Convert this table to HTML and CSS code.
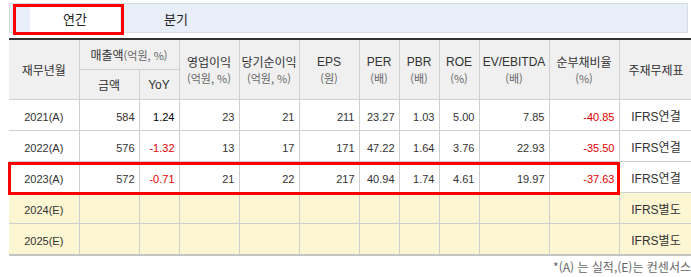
FILE: index.html
```html
<!DOCTYPE html>
<html lang="ko">
<head>
<meta charset="utf-8">
<link rel="stylesheet" href="styles.css">
</head>
<body>
<div class="page">
  <div class="tabs">
    <div class="tab active">연간</div>
    <div class="tab">분기</div>
  </div>
  <div class="table-wrap">
    <table class="fin">
      <colgroup>
        <col class="c70"><col class="c60"><col class="c40"><col class="c60"><col class="c60"><col class="c60"><col class="c40"><col class="c40"><col class="c40"><col class="c70"><col class="c70"><col class="c72">
      </colgroup>
      <thead>
        <tr class="h1">
          <th rowspan="2">재무년월</th>
          <th colspan="2">매출액<span class="unit-inline">(억원, %)</span></th>
          <th rowspan="2">영업이익<br><span class="unit">(억원, %)</span></th>
          <th rowspan="2">당기순이익<br><span class="unit">(억원, %)</span></th>
          <th rowspan="2"><span class="en">EPS</span><br><span class="unit">(원)</span></th>
          <th rowspan="2"><span class="en">PER</span><br><span class="unit">(배)</span></th>
          <th rowspan="2"><span class="en">PBR</span><br><span class="unit">(배)</span></th>
          <th rowspan="2"><span class="en">ROE</span><br><span class="unit">(%)</span></th>
          <th rowspan="2"><span class="en">EV/EBITDA</span><br><span class="unit">(배)</span></th>
          <th rowspan="2">순부채비율<br><span class="unit">(%)</span></th>
          <th rowspan="2" class="last">주재무제표</th>
        </tr>
        <tr class="h2">
          <th>금액</th>
          <th><span class="en">YoY</span></th>
        </tr>
      </thead>
      <tbody>
        <tr>
          <td class="yr">2021(A)</td><td>584</td><td class="pos">1.24</td><td>23</td><td>21</td><td>211</td><td>23.27</td><td>1.03</td><td>5.00</td><td>7.85</td><td class="neg">-40.85</td><td class="kind">IFRS연결</td>
        </tr>
        <tr>
          <td class="yr">2022(A)</td><td>576</td><td class="neg">-1.32</td><td>13</td><td>17</td><td>171</td><td>47.22</td><td>1.64</td><td>3.76</td><td>22.93</td><td class="neg">-35.50</td><td class="kind">IFRS연결</td>
        </tr>
        <tr>
          <td class="yr">2023(A)</td><td>572</td><td class="neg">-0.71</td><td>21</td><td>22</td><td>217</td><td>40.94</td><td>1.74</td><td>4.61</td><td>19.97</td><td class="neg">-37.63</td><td class="kind">IFRS연결</td>
        </tr>
        <tr class="est">
          <td class="yr">2024(E)</td><td></td><td></td><td></td><td></td><td></td><td></td><td></td><td></td><td></td><td></td><td class="kind">IFRS별도</td>
        </tr>
        <tr class="est">
          <td class="yr">2025(E)</td><td></td><td></td><td></td><td></td><td></td><td></td><td></td><td></td><td></td><td></td><td class="kind">IFRS별도</td>
        </tr>
      </tbody>
    </table>
    <div class="mark mark-row"></div>
  </div>
  <div class="note">*(A) 는 실적,(E)는 컨센서스</div>
  <div class="mark mark-tab"></div>
</div>
</body>
</html>
```

FILE: styles.css
```css
html, body {
  margin: 0;
  padding: 0;
  overflow: hidden;
  background: #fff;
}
body {
  font-family: "Noto Sans CJK KR", "Liberation Sans", sans-serif;
  color: #333;
}
.page {
  position: relative;
  width: 691px;
  height: 277px;
  padding: 3px 0 0 9px;
  box-sizing: border-box;
}
.tabs {
  display: flex;
  gap: 11px;
  width: 679px;
  height: 30px;
  box-sizing: border-box;
  border: 1px solid #d6dde8;
  background: #e8eef8;
  padding: 3px 0 0 20px;
}
.tab {
  width: 90px;
  height: 25px;
  line-height: 24px;
  text-align: center;
  font-size: 13px;
  color: #222;
}
.tab.active {
  background: #fff;
}
.table-wrap {
  position: relative;
  margin-top: 5px;
  width: 682px;
}
.fin {
  border-collapse: collapse;
  table-layout: fixed;
  width: 684px;
  border-top: 2px solid #333;
  border-bottom: 2px solid #c4c4c4;
}
.c70 { width: 70px; }
.c60 { width: 60px; }
.c40 { width: 40px; }
.c72 { width: 74px; }
.fin th {
  background: #f0f0f0;
  border: 1px solid #cfcfcf;
  border-top: none;
  font-weight: normal;
  font-size: 12px;
  color: #333;
  line-height: 16px;
  padding: 0;
  text-align: center;
  vertical-align: middle;
}
.fin th:first-child, .fin td:first-child { border-left: none; }
.fin th.last, .fin td.kind { border-right: 1px solid #cfcfcf; }
.fin tr.h1 th { height: 29px; }
.fin tr.h2 th { height: 29px; }
.en {
  font-family: "Liberation Sans", sans-serif;
  font-size: 12px;
  color: #333;
}
.unit {
  font-size: 11px;
  color: #666;
}
.unit-inline {
  font-size: 11px;
  color: #666;
}
.fin td {
  height: 26px;
  border: 1px solid #cfcfcf;
  padding: 4px 4px 0 0;
  font-family: "Liberation Sans", sans-serif;
  font-size: 11px;
  line-height: 14px;
  color: #333;
  text-align: right;
  vertical-align: middle;
}
.fin td.yr {
  text-align: center;
  padding: 4px 0 0 0;
}
.fin td.kind {
  text-align: center;
  padding: 4px 0 0 0;
  font-family: "Liberation Sans", "Noto Sans CJK KR", sans-serif;
  font-size: 12px;
}
.fin td.pos { color: #000; }
.fin td.neg { color: #e00000; }
.fin tr.est td { background: #fcf6d2; }
.note {
  margin-top: 4px;
  width: 682px;
  text-align: right;
  font-size: 12px;
  line-height: 14px;
  color: #666;
  white-space: nowrap;
}
.mark {
  position: absolute;
  border: 3px solid #ff0000;
  box-sizing: border-box;
  pointer-events: none;
}
.mark-tab {
  left: 13px;
  top: 4px;
  width: 111px;
  height: 31px;
}
.mark-row {
  left: -1px;
  top: 124px;
  width: 612px;
  height: 33px;
}
```
